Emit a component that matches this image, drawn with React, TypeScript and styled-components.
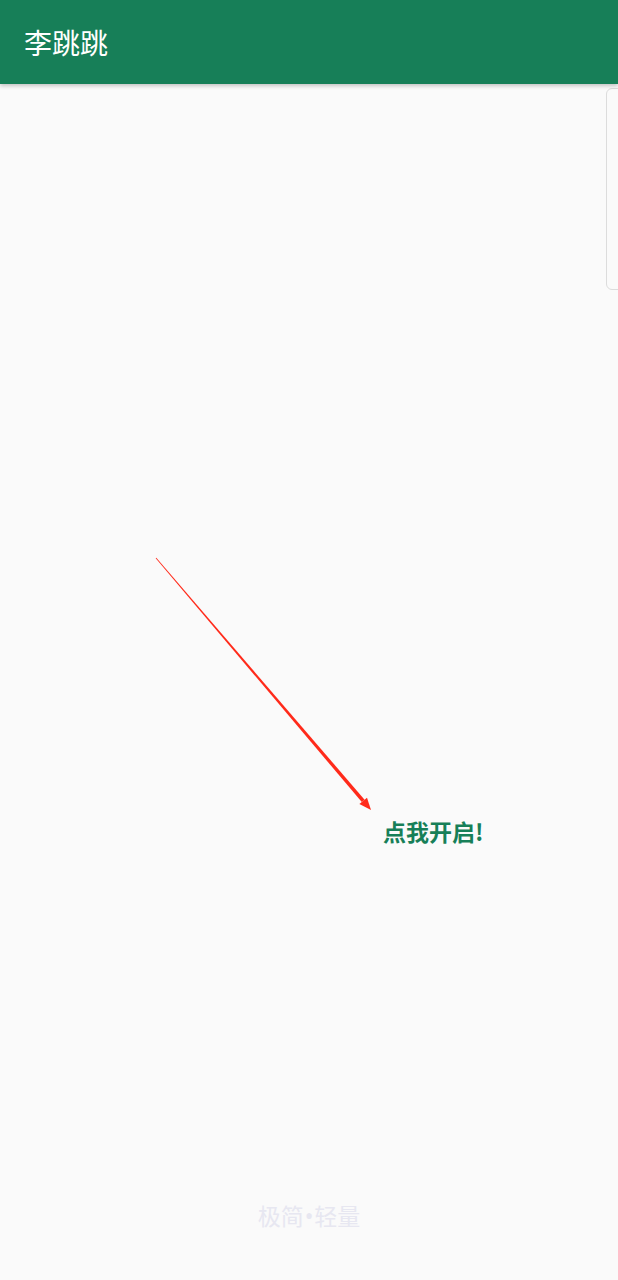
import React from 'react'
import styled, { createGlobalStyle } from 'styled-components'

const GlobalStyle = createGlobalStyle`
  html, body {
    margin: 0;
    padding: 0;
    background: #fafafa;
    overflow: hidden;
  }
  body {
    font-family: "Noto Sans CJK SC", "Noto Sans", sans-serif;
  }
`

const Page = styled.div`
  height: 1280px;
  display: flex;
  flex-direction: column;
  background: #fafafa;
  position: relative;
`

const Header = styled.header`
  height: 84px;
  flex-shrink: 0;
  display: flex;
  align-items: center;
  padding-left: 24px;
  background: #177f58;
  box-shadow: 0 2px 4px rgba(0, 0, 0, 0.22);
  z-index: 1;
`

const Title = styled.h1`
  margin: 0;
  font-size: 28px;
  font-weight: 400;
  color: #fff;
`

const Main = styled.main`
  flex: 1;
  display: flex;
  flex-direction: column;
  position: relative;
`

const DrawerHandle = styled.div`
  position: absolute;
  top: 4px;
  right: -10px;
  width: 20px;
  height: 200px;
  border: 1px solid #dcdcdc;
  border-radius: 6px;
  background: #fafafa;
`

const Stage = styled.div`
  padding-top: 470px;
  padding-left: 152px;
  display: flex;
  flex-direction: column;
`

const Arrow = styled.svg`
  display: block;
`

const StartButton = styled.button`
  margin: 0 0 0 231px;
  padding: 0;
  border: none;
  background: none;
  align-self: flex-start;
  font-family: "Noto Sans CJK SC", "Noto Sans", sans-serif;
  font-size: 23px;
  font-weight: 700;
  line-height: 30px;
  color: #177f58;
  cursor: pointer;
`

const Footer = styled.footer`
  margin-top: auto;
  padding-bottom: 48px;
  text-align: center;
  font-size: 23px;
  line-height: 32px;
  color: #e7e7f1;
`

const Dot = styled.span`
  font-family: "Noto Sans", sans-serif;
  padding: 0 1px;
`

const PointerArrow = () => (
  <Arrow width="224" height="262" viewBox="0 0 224 262">
    <polygon
      points="3.7,4.3 4.3,3.7 212.6,245.7 209.8,248.1"
      fill="#ff2a1a"
    />
    <polygon points="207.4,250.1 215,243.7 219,256" fill="#ff2a1a" />
  </Arrow>
)

export default function App() {
  return (
    <>
      <GlobalStyle />
      <Page>
        <Header>
          <Title>李跳跳</Title>
        </Header>
        <Main>
          <DrawerHandle />
          <Stage>
            <PointerArrow />
            <StartButton>点我开启!</StartButton>
          </Stage>
          <Footer>
            极简<Dot>•</Dot>轻量
          </Footer>
        </Main>
      </Page>
    </>
  )
}
